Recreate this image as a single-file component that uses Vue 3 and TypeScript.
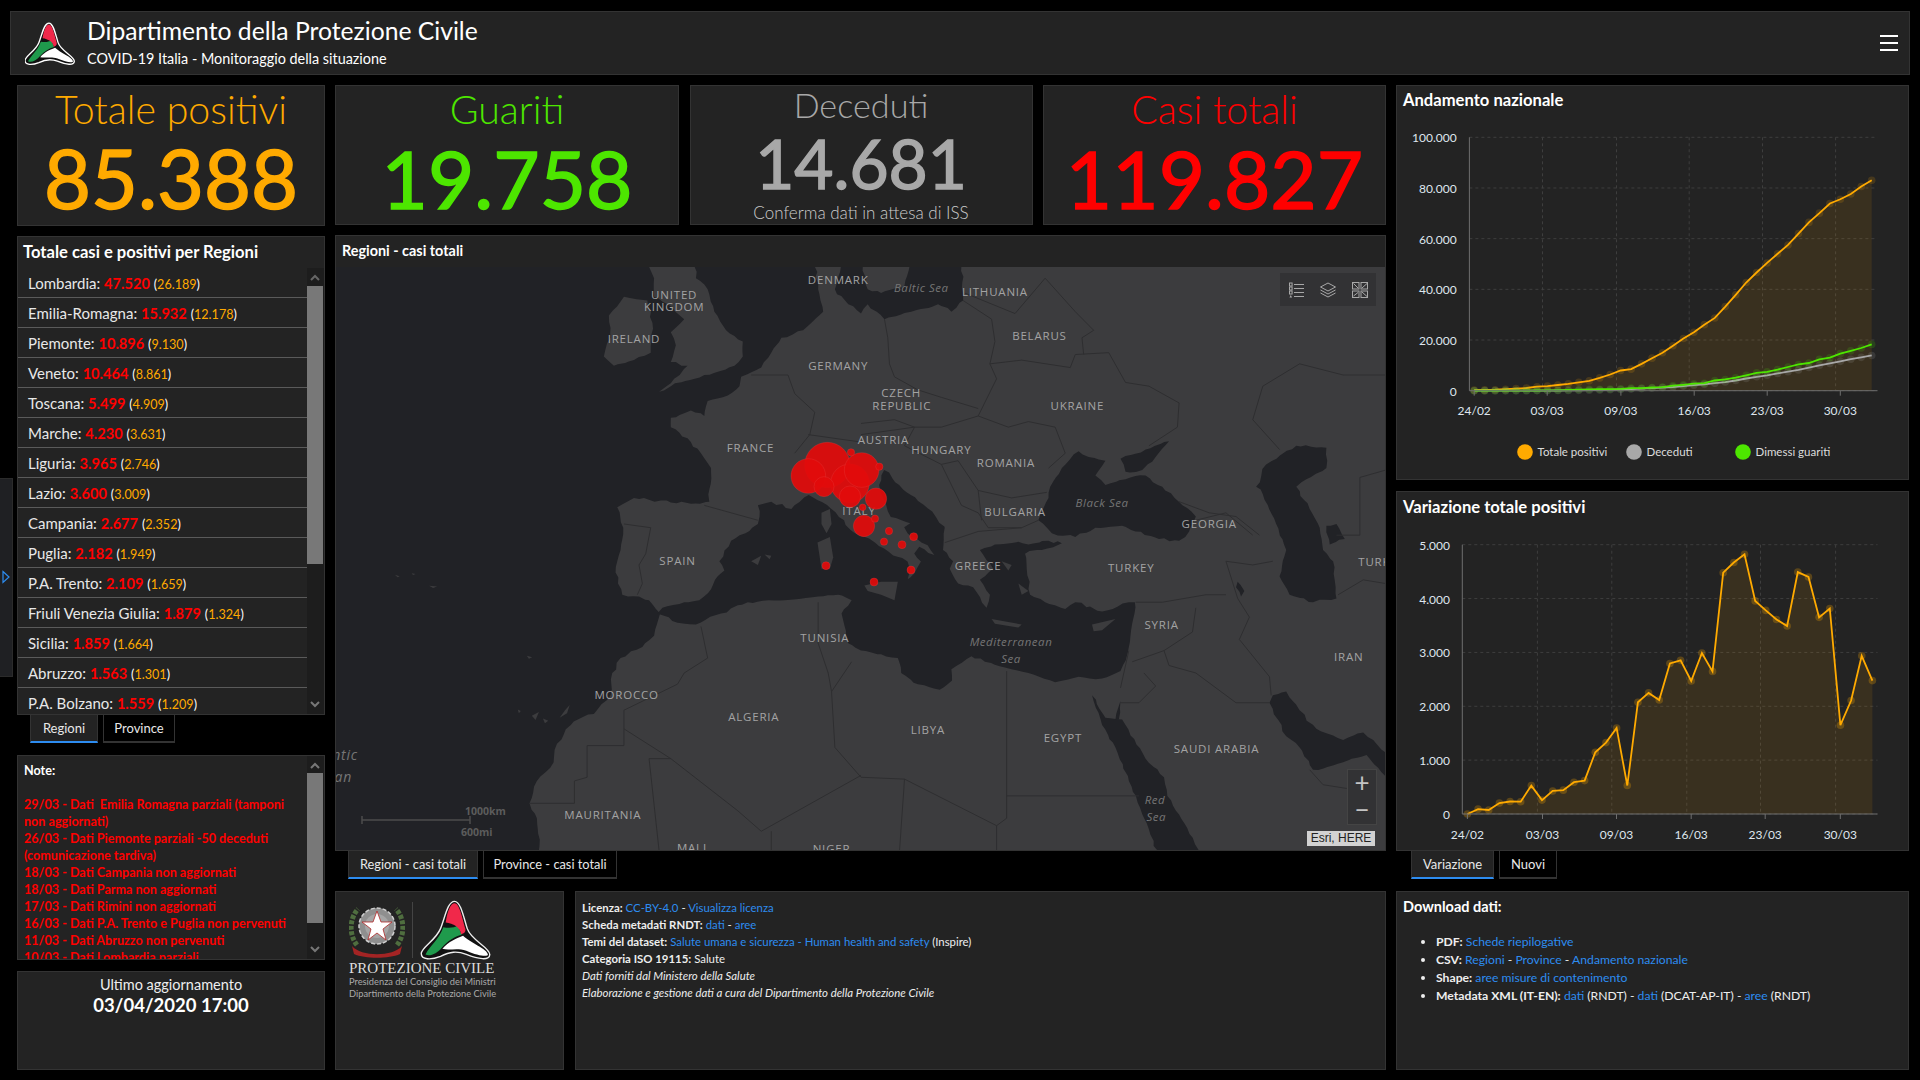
<script setup lang="ts">
import { computed } from 'vue'

const regions = [
  ['Lombardia', '47.520', '26.189'], ['Emilia-Romagna', '15.932', '12.178'], ['Piemonte', '10.896', '9.130'],
  ['Veneto', '10.464', '8.861'], ['Toscana', '5.499', '4.909'], ['Marche', '4.230', '3.631'],
  ['Liguria', '3.965', '2.746'], ['Lazio', '3.600', '3.009'], ['Campania', '2.677', '2.352'],
  ['Puglia', '2.182', '1.949'], ['P.A. Trento', '2.109', '1.659'], ['Friuli Venezia Giulia', '1.879', '1.324'],
  ['Sicilia', '1.859', '1.664'], ['Abruzzo', '1.563', '1.301'], ['P.A. Bolzano', '1.559', '1.209'],
]

const notes = [
  '29/03 - Dati  Emilia Romagna parziali (tamponi non aggiornati)',
  '26/03 - Dati Piemonte parziali -50 deceduti (comunicazione tardiva)',
  '18/03 - Dati Campania non aggiornati',
  '18/03 - Dati Parma non aggiornati',
  '17/03 - Dati Rimini non aggiornati',
  '16/03 - Dati P.A. Trento e Puglia non pervenuti',
  '11/03 - Dati Abruzzo non pervenuti',
  '10/03 - Dati Lombardia parziali',
]

// ---- charts: everything is in page pixels, the svg viewBox starts at the panel offset
const positivi = [221, 311, 385, 588, 821, 1049, 1577, 1835, 2263, 2706, 3296, 3916, 5061, 6387, 7985, 8514, 10590, 12839, 14955, 17750, 20603, 23073, 26062, 28710, 33190, 37860, 42681, 46638, 50418, 54030, 57521, 62013, 66414, 70065, 73880, 75528, 77635, 80572, 83049]
const deceduti = [7, 10, 12, 17, 21, 29, 34, 52, 79, 107, 148, 197, 233, 366, 463, 631, 827, 1016, 1266, 1441, 1809, 2158, 2503, 2978, 3405, 4032, 4825, 5476, 6077, 6820, 7503, 8215, 9134, 10023, 10779, 11591, 12428, 13155, 13915]
const guariti = [1, 1, 3, 45, 46, 50, 83, 149, 160, 276, 414, 523, 589, 622, 724, 1004, 1045, 1258, 1439, 1966, 2335, 2749, 2941, 4025, 4440, 5129, 6072, 7024, 7432, 8326, 9362, 10361, 10950, 12384, 13030, 14620, 15729, 16847, 18278]
const variazione = [0, 90, 74, 203, 233, 228, 528, 258, 428, 443, 590, 620, 1145, 1326, 1598, 529, 2076, 2249, 2116, 2795, 2853, 2470, 2989, 2648, 4480, 4670, 4821, 3957, 3780, 3612, 3491, 4492, 4401, 3651, 3815, 1648, 2107, 2937, 2477]

const tickLabels = ['24/02', '03/03', '09/03', '16/03', '23/03', '30/03']

interface Box { x0: number; x1: number; left: number; right: number; top: number; bottom: number; max: number }

function pts(data: number[], b: Box) {
  return data.map((v, i) => ({
    x: b.x0 + (i * (b.x1 - b.x0)) / (data.length - 1),
    y: b.bottom - (v / b.max) * (b.bottom - b.top),
  }))
}
const toLine = (p: { x: number; y: number }[]) => p.map((q) => `${q.x.toFixed(1)},${q.y.toFixed(1)}`).join(' ')
const toArea = (p: { x: number; y: number }[], bottom: number) =>
  `${p[0].x},${bottom} ${toLine(p)} ${p[p.length - 1].x},${bottom}`

const box1: Box = { x0: 1474.2, x1: 1871.7, left: 1469.4, right: 1877.5, top: 137.3, bottom: 390.7, max: 100000 }
const box2: Box = { x0: 1467.4, x1: 1872.4, left: 1462.3, right: 1877.5, top: 544.7, bottom: 814, max: 5000 }

const ticks1 = [1474.2, 1547.2, 1620.9, 1694.2, 1767.2, 1840.3]
const grid1 = [1542.5, 1616.5, 1689.2, 1762.5, 1835.6]
const ticks2 = [1467.4, 1542.5, 1616.5, 1691.2, 1765.2, 1840.3]
const grid2 = [1537.4, 1611.8, 1686.8, 1760.5, 1835.6]

const series1 = computed(() => [
  { color: '#ffaa00', p: pts(positivi, box1) },
  { color: '#a8a8a8', p: pts(deceduti, box1) },
  { color: '#4de600', p: pts(guariti, box1) },
])
const series2 = computed(() => pts(variazione, box2))

const yVals1 = ['100.000', '80.000', '60.000', '40.000', '20.000', '0']
const yVals2 = ['5.000', '4.000', '3.000', '2.000', '1.000', '0']
const legend = [
  { label: 'Totale positivi', cx: 1525, color: '#ffaa00' },
  { label: 'Deceduti', cx: 1634, color: '#a8a8a8' },
  { label: 'Dimessi guariti', cx: 1743, color: '#4de600' },
]
const yAt = (b: Box, i: number) => b.top + (i * (b.bottom - b.top)) / 5

// ---- map: outlines are in a 3136x1568 space, scaled onto the 1050x584 map
const shift = (s: string) =>
  s.trim().split(/\s+/).map((p) => {
    const [x, y] = p.split(',')
    return `${+x + 1568},${y}`
  }).join(' ')

// breaks long straight edges up a little so coasts don't look like plain polygons
function rough(s: string, amp = 4, step = 16) {
  const p = s.trim().split(/\s+/).map((q) => q.split(',').map(Number))
  const out: string[] = []
  p.forEach((a, i) => {
    const b = p[(i + 1) % p.length]
    const n = Math.max(1, Math.round(Math.hypot(b[0] - a[0], b[1] - a[1]) / step))
    for (let k = 0; k < n; k++) {
      const t = k / n
      const x = a[0] + (b[0] - a[0]) * t
      const y = a[1] + (b[1] - a[1]) * t
      const dx = k ? Math.sin(x * 0.37 + y * 0.71) * Math.cos(y * 0.23) * amp : 0
      const dy = k ? Math.cos(x * 0.53 - y * 0.41) * Math.sin(x * 0.19) * amp : 0
      out.push(`${(x + dx).toFixed(1)},${(y + dy).toFixed(1)}`)
    }
  })
  return out.join(' ')
}

const ocean = '1430,-20 1440,60 1455,120 1420,150 1395,170 1330,190 1300,230 1270,270 1210,295 1205,320 1170,345 1110,360 1100,400 1060,385 1000,405 1000,430 1050,460 1090,500 1120,540 1115,630 1075,635 1000,632 890,620 840,645 858,700 850,760 835,820 855,880 905,885 935,895 968,930 950,990 915,1020 850,1050 825,1090 820,1150 770,1200 710,1220 660,1280 650,1330 600,1380 578,1440 600,1480 612,1600 -20,1600 -20,-20'
const med = '960,930 975,915 1040,900 1085,895 1120,865 1140,830 1160,815 1145,790 1180,735 1260,690 1265,670 1260,640 1300,630 1360,650 1412,612 1477,648 1502,671 1537,706 1577,724 1637,756 1677,778 1707,791 1715,814 1707,841 1695,850 1727,823 1747,791 1727,769 1742,751 1787,773 1767,747 1707,715 1697,699 1715,688 1657,671 1642,635 1622,585 1629,559 1637,545 1652,552 1662,568 1682,585 1717,612 1767,648 1817,697 '
  + shift('250,700 245,760 275,790 265,810 290,850 335,860 375,915 385,880 355,840 395,810 355,760 400,745 470,738 500,745 560,735 600,742 540,760 490,770 495,810 505,880 550,900 610,918 640,900 720,925 800,900 818,900 800,1020 775,1085 720,1105 650,1100 580,1115 500,1090 430,1075 370,1060 330,1045 270,1080 272,1110 235,1135 170,1120 120,1090 110,1050 60,1040 0,1030')
  + ' 1530,1010 1510,930 1540,895 1500,880 1440,885 1340,895 1230,900 1150,930 1075,960 1020,955 975,935'

const seas = [
  ocean,
  med,
  // baltic and kattegat
  '1510,-20 1490,60 1530,100 1568,125 ' + shift('20,100 70,140 150,120 230,100 270,120 305,90 300,-20 150,-20 130,50 60,70 20,60 0,-20'),
  ...[
    '600,540 650,495 680,510 730,520 700,560 730,585 790,570 850,560 900,590 960,640 1000,670 980,710 950,735 890,730 820,710 780,695 700,700 640,725 570,715 530,680 560,620 565,590',
    '775,515 850,490 920,468 880,510 840,545 790,550',
    '1300,480 1390,485 1390,540 1330,570 1300,590 1340,650 1370,700 1380,760 1410,790 1420,890 1350,900 1280,880 1250,830 1270,760 1240,690 1200,610 1180,590 1210,530',
    '1390,695 1420,690 1445,730 1400,745',
    '1125,845 1145,870 1135,885 1120,860',
    '690,1150 730,1210 780,1215 850,1320 905,1370 915,1420 950,1470 1030,1600 895,1600 860,1510 800,1380 760,1290 720,1230',
    '775,1165 760,1215 770,1215',
    '1230,1150 1270,1140 1310,1190 1360,1240 1440,1270 1500,1250 1530,1270 1600,1340 1600,1400 1510,1310 1440,1330 1350,1350 1310,1290 1270,1260 1220,1170',
  ].map(shift),
].map((s) => rough(s))

const islands = [
  ...[
    '930,-20 1070,-20 1075,30 1110,60 1130,120 1165,170 1215,200 1215,240 1190,265 1100,290 1000,320 965,335 1010,300 1050,265 1000,255 1015,210 1000,175 1040,140 990,100 950,80 950,30',
    '815,130 860,80 930,90 945,150 940,230 890,250 830,265 800,240 820,190',
  ].map((s) => rough(s)),
  '1450,660 1475,650 1480,690 1465,715 1450,690',
  '1438,740 1475,725 1485,780 1475,810 1450,810',
  '1240,790 1270,775 1260,800',
  '1280,772 1300,775 1295,785',
  // azores, madeira, canaries
  '176,826 190,830 184,833', '226,822 238,824 230,827', '278,856 302,858 290,862', '570,1044 586,1048 576,1052',
  '543,1188 552,1192 546,1198', '585,1205 606,1195 596,1216', '618,1212 634,1218 624,1225', '668,1210 684,1190 698,1176 690,1198',
  ...[
    '10,855 60,845 110,845 100,895 60,880 20,870',
    '390,945 480,960 470,968 400,958',
    '690,960 760,945 720,975 695,978',
    '420,790 450,800 440,815',
    '470,850 500,870 480,880',
  ].map(shift),
]

const borders = [
  '1100,640 1180,660 1260,680', '860,690 940,700 925,770 905,800 915,850 900,880',
  '1240,290 1350,290 1370,340 1430,390 1415,450 1370,500',
  '1090,965 1110,1050 1040,1090 1020,1120 860,1190 860,1240 1000,1320 1200,1460 1270,1515 1568,1365',
  '860,1240 860,1285 750,1285 750,1370 712,1380 712,1440 578,1440', '935,1320 1000,1320', '935,1320 965,1568',
  '1440,900 1440,1010 1470,1090 1480,1140 1540,1060', '1480,1140 1490,1290 1568,1370', '1300,1515 1300,1568',
  '1410,450 1568,470',
  ...[
    '70,140 80,190 85,260 100,295', '305,90 390,140 400,200 385,260 405,300 350,400', '100,295 170,330 240,350 350,380',
    '385,260 480,250 625,270 640,235 740,230 790,310 860,320 950,365 945,430 860,480', '310,70 460,125', '460,125 550,30 640,120 695,170 660,190 665,235',
    '350,400 440,430 500,415 580,430 610,500 560,540', '290,520 350,600 450,620 555,605', '160,430 240,430 350,400', '160,430 130,480 240,530 290,520',
    '240,530 300,640 350,660 380,700 480,700 530,680', '350,600 360,680', '250,740 350,710 480,700', '0,450 160,430', '0,420 100,410 160,430',
    '1000,680 1090,660 1170,720', '1090,790 1170,800 1230,790', '950,630 1040,660 1120,670 1190,720', '820,900 900,900 1030,880 1090,880',
    '1090,790 1125,890 1160,940 1130,1000 1220,1100 1225,1150', '1000,915 990,980 905,1030 810,1060', '905,1030 920,1070 1000,1090 1120,1170 1220,1170',
    '845,1090 880,1125 830,1170 775,1170', '800,1030 775,1130', '435,1085 435,1480 405,1500 405,1568', '435,1420 720,1420 830,1420',
    '0,1370 130,1375 405,1500', '130,1375 115,1568', '1490,565 1568,545', '1490,565 1490,720 1420,720', '1425,880 1500,840 1568,850',
    '1340,1350 1380,1390 1450,1400 1490,1380', '1170,410 1200,320 1310,260 1440,290 1568,290', '1170,410 1250,490',
  ].map(shift),
]

const SX = 1050 / 3136
const SY = 584 / 1568

const labels = [
  ['UNITED', 1010, 75], ['KINGDOM', 1010, 107], ['IRELAND', 890, 193], ['DENMARK', 1500, 35], ['GERMANY', 1500, 266],
  ['FRANCE', 1238, 486], ['SPAIN', 1020, 790], ['TUNISIA', 1460, 996], ['MOROCCO', 868, 1149], ['ALGERIA', 1248, 1208],
  ['MAURITANIA', 797, 1471], ['MALI', 1063, 1560], ['NIGER', 1480, 1562], ['ITALY', 1562, 655],
  ['LITHUANIA', 1968, 67], ['BELARUS', 2101, 185], ['CZECH', 1688, 338], ['REPUBLIC', 1690, 373], ['UKRAINE', 2214, 373],
  ['AUSTRIA', 1635, 464], ['HUNGARY', 1808, 491], ['ROMANIA', 2001, 526], ['BULGARIA', 2028, 658], ['GEORGIA', 2608, 690],
  ['GREECE', 1918, 803], ['TURKEY', 2375, 808], ['TURKMENISTAN', 3136 + 60, 792], ['SYRIA', 2466, 961], ['IRAN', 3025, 1047],
  ['LIBYA', 1768, 1243], ['EGYPT', 2171, 1265], ['SAUDI ARABIA', 2630, 1294],
].map(([t, x, y]) => ({ t: t as string, x: (x as number) * SX, y: (y as number) * SY + 4 }))

const seaLabels = [
  ['Baltic Sea', 1748, 57], ['Black Sea', 2288, 633], ['Mediterranean', 2016, 1007], ['Sea', 2016, 1052],
  ['Red', 2446, 1432], ['Sea', 2450, 1477],
].map(([t, x, y]) => ({ t: t as string, x: (x as number) * SX, y: (y as number) * SY + 4 }))

// x = 414 + zx / 3, y = 153 + zy / 3 from the italy crop
const bubbles = [
  [232, 135, 68], [175, 168, 52], [300, 190, 58], [335, 150, 52], [222, 200, 30], [300, 230, 32], [378, 236, 32],
  [303, 97, 11], [388, 140, 11], [338, 262, 10], [342, 318, 32], [375, 296, 11], [417, 333, 11], [402, 365, 11],
  [491, 350, 12], [456, 374, 12], [483, 450, 12], [372, 486, 12], [228, 437, 12],
].map(([x, y, r]) => ({ x: 414 + x / 3, y: 153 + y / 3, r: r / 3 }))
</script>

<template>
  <div class="page">
    <div class="side-handle"><svg width="8" height="14" viewBox="0 0 8 14"><path d="M1 1.5 L7 7 L1 12.5 Z" fill="none" stroke="#2d8cf0" stroke-width="1.2" /></svg></div>

    <header class="top">
      <svg class="top-logo" width="50" height="44" viewBox="74 64 148 130">
        <path d="M145 67 C158 67 164 100 172 125 C180 150 220 165 220 180 C220 194 195 190 170 180 C150 172 135 174 115 184 C95 192 74 192 74 178 C74 165 105 150 115 125 C125 100 130 67 145 67 Z" fill="#111" stroke="#fff" stroke-width="4" />
        <path d="M83 180 C92 162 112 148 121 122 C132 124 144 124 152 118 L160 138 C145 142 132 150 118 165 C108 178 92 185 83 180 Z" fill="#1f9a4c" />
        <path d="M126 112 C130 86 137 71 145 71 C155 71 161 100 168 126 C169 133 164 136 159 137 C157 122 142 114 126 112 Z" fill="#f0284a" />
        <path d="M119 168 C132 152 150 145 163 140 C178 155 215 168 216 180 C216 186 195 183 170 172 C150 165 135 172 119 168 Z" fill="#fff" />
      </svg>
      <div class="top-text">
        <div class="top-title">Dipartimento della Protezione Civile</div>
        <div class="top-sub">COVID-19 Italia - Monitoraggio della situazione</div>
      </div>
      <div class="burger"><span></span><span></span><span></span></div>
    </header>

    <main class="main">
      <div class="col">
        <section class="panel stat stat-first">
          <div class="stat-title orange">Totale positivi</div>
          <div class="stat-num orange">85.388</div>
        </section>

        <section class="panel list-panel">
          <h2 class="list-title">Totale casi e positivi per Regioni</h2>
          <div class="list-body">
            <ul class="rows">
              <li v-for="r in regions" :key="r[0]" class="row">
                {{ r[0] }}: <b class="red">{{ r[1] }}</b> <small>(<span class="orange">{{ r[2] }}</span>)</small>
              </li>
            </ul>
            <div class="scrollbar sb-list">
              <svg class="arrow" width="16" height="16" viewBox="0 0 16 16"><path d="M4 10 L8 6 L12 10" fill="none" stroke="#666" stroke-width="2" /></svg>
              <div class="thumb thumb-list"></div>
              <svg class="arrow arrow-end" width="16" height="16" viewBox="0 0 16 16"><path d="M4 6 L8 10 L12 6" fill="none" stroke="#777" stroke-width="2" /></svg>
            </div>
          </div>
        </section>
        <div class="tabs tabs-left">
          <div class="tab active">Regioni</div>
          <div class="tab">Province</div>
        </div>

        <section class="panel note-panel">
          <div class="note-text">
            <div class="note-head">Note:</div>
            <div v-for="n in notes" :key="n" class="note-line">{{ n }}</div>
          </div>
          <div class="scrollbar sb-note">
            <svg class="arrow" width="16" height="16" viewBox="0 0 16 16"><path d="M4 10 L8 6 L12 10" fill="none" stroke="#777" stroke-width="2" /></svg>
            <div class="thumb thumb-note"></div>
            <svg class="arrow arrow-end" width="16" height="16" viewBox="0 0 16 16"><path d="M4 6 L8 10 L12 6" fill="none" stroke="#777" stroke-width="2" /></svg>
          </div>
        </section>

        <section class="panel updated">
          <div class="updated-label">Ultimo aggiornamento</div>
          <div class="updated-date">03/04/2020 17:00</div>
        </section>
      </div>

      <div class="col">
        <div class="stats">
          <section class="panel stat">
            <div class="stat-title green">Guariti</div>
            <div class="stat-num green">19.758</div>
          </section>
          <section class="panel stat stat-dead">
            <div class="stat-title grey">Deceduti</div>
            <div class="stat-num grey">14.681</div>
            <div class="stat-note">Conferma dati in attesa di ISS</div>
          </section>
          <section class="panel stat">
            <div class="stat-title red">Casi totali</div>
            <div class="stat-num red">119.827</div>
          </section>
        </div>

        <section class="panel map-panel">
          <h2 class="map-title">Regioni - casi totali</h2>
          <div class="map">
            <svg class="map-svg" width="1050" height="584" viewBox="0 0 1050 584">
              <rect width="1050" height="584" fill="#3c3c3e" />
              <g :transform="`scale(${SX} ${SY})`">
                <polygon v-for="(s, i) in seas" :key="'s' + i" :points="s" fill="#212226" />
                <polygon v-for="(s, i) in islands" :key="'i' + i" :points="s" fill="#3c3c3e" />
                <polyline v-for="(s, i) in borders" :key="'b' + i" :points="s" fill="none" stroke="#2e2e30" stroke-width="1" vector-effect="non-scaling-stroke" />
              </g>
              <text v-for="l in labels" :key="l.t + l.x" class="map-label" :x="l.x" :y="l.y" text-anchor="middle">{{ l.t }}</text>
              <text v-for="l in seaLabels" :key="l.t + l.x" class="sea-label" :x="l.x" :y="l.y" text-anchor="middle">{{ l.t }}</text>
              <text class="ocean-label" x="22" y="493" text-anchor="end">Atlantic</text>
              <text class="ocean-label" x="16" y="515" text-anchor="end">Ocean</text>
              <g>
                <circle v-for="(b, i) in bubbles" :key="i" :cx="b.x" :cy="b.y" :r="b.r" fill="#e20b0b" fill-opacity=".93" stroke="#e64a4a" stroke-opacity=".25" />
              </g>
              <path d="M26 549 V557 M26 553 H134 M134 549 V557" stroke="#4c4c4c" stroke-width="1.5" fill="none" />
              <text class="scale-label" x="129" y="548">1000km</text>
              <text class="scale-label" x="125" y="569">600mi</text>
            </svg>

            <div class="map-tools">
              <svg width="15" height="16" viewBox="0 0 15 16">
                <g fill="none" stroke="#a8a8a8">
                  <path d="M5 2.5H15M5 6.5H15M5 10.5H15M5 14.5H15" />
                  <rect x=".5" y="1" width="2.6" height="3" /><rect x=".5" y="5" width="2.6" height="3" /><rect x=".5" y="9" width="2.6" height="3" />
                </g>
                <path d="M.5 15.5 L1.8 13 L3.1 15.5 Z" fill="#a8a8a8" />
              </svg>
              <svg width="16" height="16" viewBox="0 0 16 16">
                <g fill="none" stroke="#a8a8a8">
                  <path d="M.5 5 L8 1 L15.5 5 L8 9 Z" />
                  <path d="M.5 8 L8 12 L15.5 8" />
                  <path d="M.5 11 L8 15 L15.5 11" />
                </g>
              </svg>
              <svg width="16" height="16" viewBox="0 0 16 16">
                <g fill="none" stroke="#a8a8a8">
                  <rect x=".5" y=".5" width="6.5" height="6.5" /><rect x="9" y=".5" width="6.5" height="6.5" /><rect x=".5" y="9" width="6.5" height="6.5" /><rect x="9" y="9" width="6.5" height="6.5" />
                  <path d="M10 6 L15 1.5 M1.5 14 L6 10.5 M1.5 1.5 L6 6 M10 10 L15 14.5" />
                </g>
              </svg>
            </div>
            <div class="map-zoom">
              <div class="zoom-btn">+</div>
              <div class="zoom-btn">−</div>
            </div>
            <div class="attribution">Esri, HERE</div>
          </div>
        </section>
        <div class="tabs tabs-map">
          <div class="tab active">Regioni - casi totali</div>
          <div class="tab">Province - casi totali</div>
        </div>

        <div class="bottom">
          <section class="panel logo-panel">
            <div class="logos">
              <svg width="56" height="58" viewBox="0 0 56 58">
                <g fill="none" stroke="#4f6e3f" stroke-width="5">
                  <path d="M8 44 C0 34 0 18 9 8" stroke-dasharray="4 1.5" />
                  <path d="M48 44 C56 34 56 18 47 8" stroke-dasharray="4 1.5" />
                </g>
                <circle cx="28" cy="25" r="18" fill="#8f8f8f" stroke="#cfcfcf" stroke-width="1.5" stroke-dasharray="4 2" />
                <circle cx="28" cy="25" r="12" fill="#a5a5a5" />
                <polygon points="28,10 32,21 43,21 34,28 37,39 28,32 19,39 22,28 13,21 24,21" fill="#fff" stroke="#b02a2a" stroke-width=".8" />
                <path d="M3 45 C12 56 44 56 53 45 L51 53 C40 58 16 58 5 53 Z" fill="#a42424" />
              </svg>
              <span class="logo-rule"></span>
              <svg width="76" height="61" viewBox="74 64 148 130">
                <path d="M145 67 C158 67 164 100 172 125 C180 150 220 165 220 180 C220 194 195 190 170 180 C150 172 135 174 115 184 C95 192 74 192 74 178 C74 165 105 150 115 125 C125 100 130 67 145 67 Z" fill="#111" stroke="#eee" stroke-width="3" />
                <path d="M83 180 C92 162 112 148 121 122 C132 124 144 124 152 118 L160 138 C145 142 132 150 118 165 C108 178 92 185 83 180 Z" fill="#1f9a4c" />
                <path d="M126 112 C130 86 137 71 145 71 C155 71 161 100 168 126 C169 133 164 136 159 137 C157 122 142 114 126 112 Z" fill="#f0284a" />
                <path d="M119 168 C132 152 150 145 163 140 C178 155 215 168 216 180 C216 186 195 183 170 172 C150 165 135 172 119 168 Z" fill="#fff" />
              </svg>
            </div>
            <div class="logo-name">PROTEZIONE CIVILE</div>
            <div class="logo-sub">Presidenza del Consiglio dei Ministri</div>
            <div class="logo-sub">Dipartimento della Protezione Civile</div>
          </section>
          <section class="panel info-panel">
            <p><b>Licenza:</b> <a>CC-BY-4.0</a> - <a>Visualizza licenza</a></p>
            <p><b>Scheda metadati RNDT:</b> <a>dati</a> - <a>aree</a></p>
            <p><b>Temi del dataset:</b> <a>Salute umana e sicurezza - Human health and safety</a> (Inspire)</p>
            <p><b>Categoria ISO 19115:</b> Salute</p>
            <p><i>Dati forniti dal Ministero della Salute</i></p>
            <p><i>Elaborazione e gestione dati a cura del Dipartimento della Protezione Civile</i></p>
          </section>
        </div>
      </div>

      <div class="col">
        <section class="panel chart-panel chart-one">
          <h2 class="chart-title">Andamento nazionale</h2>
          <svg class="chart" width="513" height="360" viewBox="1396 120 513 360">
            <line v-for="(v, i) in yVals1" :key="'g' + v" :x1="box1.left" :x2="box1.right" :y1="yAt(box1, i)" :y2="yAt(box1, i)" class="grid" />
            <line v-for="x in grid1" :key="x" :x1="x" :x2="x" :y1="box1.top" :y2="box1.bottom" class="grid" />
            <polygon :points="toArea(series1[0].p, box1.bottom)" fill="#ffaa00" fill-opacity=".1" />
            <template v-for="s in series1" :key="s.color">
              <circle v-for="(q, i) in s.p" :key="i" :cx="q.x" :cy="q.y" r="3.8" :fill="s.color" fill-opacity=".16" />
              <polyline :points="toLine(s.p)" fill="none" :stroke="s.color" stroke-width="1.8" />
            </template>
            <path :d="`M${box1.left} ${box1.top} V${box1.bottom} H${box1.right}`" class="axis" />
            <line v-for="x in ticks1" :key="x" :x1="x" :x2="x" :y1="box1.bottom" :y2="box1.bottom + 5" class="axis" />
            <text v-for="(v, i) in yVals1" :key="v" :x="1456.6" :y="yAt(box1, i) + 5" text-anchor="end" class="tick">{{ v }}</text>
            <text v-for="(t, i) in tickLabels" :key="t" :x="ticks1[i]" y="414.5" text-anchor="middle" class="tick">{{ t }}</text>
            <g v-for="l in legend" :key="l.label">
              <circle :cx="l.cx" cy="452" r="7.8" :fill="l.color" />
              <text :x="l.cx + 12.5" y="456" class="legend">{{ l.label }}</text>
            </g>
          </svg>
        </section>

        <section class="panel chart-panel chart-two">
          <h2 class="chart-title">Variazione totale positivi</h2>
          <svg class="chart" width="513" height="325" viewBox="1396 526 513 325">
            <line v-for="(v, i) in yVals2" :key="'g' + v" :x1="box2.left" :x2="box2.right" :y1="yAt(box2, i)" :y2="yAt(box2, i)" class="grid" />
            <line v-for="x in grid2" :key="x" :x1="x" :x2="x" :y1="box2.top" :y2="box2.bottom" class="grid" />
            <polygon :points="toArea(series2, box2.bottom)" fill="#ffaa00" fill-opacity=".1" />
            <circle v-for="(q, i) in series2" :key="i" :cx="q.x" :cy="q.y" r="3.8" fill="#ffaa00" fill-opacity=".25" />
            <polyline :points="toLine(series2)" fill="none" stroke="#ffaa00" stroke-width="1.8" />
            <path :d="`M${box2.left} ${box2.top} V${box2.bottom} H${box2.right}`" class="axis" />
            <line v-for="x in ticks2" :key="x" :x1="x" :x2="x" :y1="box2.bottom" :y2="box2.bottom + 5" class="axis" />
            <text v-for="(v, i) in yVals2" :key="v" :x="1450" :y="yAt(box2, i) + 5" text-anchor="end" class="tick">{{ v }}</text>
            <text v-for="(t, i) in tickLabels" :key="t" :x="ticks2[i]" y="838.5" text-anchor="middle" class="tick">{{ t }}</text>
          </svg>
        </section>
        <div class="tabs tabs-chart">
          <div class="tab active">Variazione</div>
          <div class="tab">Nuovi</div>
        </div>

        <section class="panel download">
          <h2 class="dl-title">Download dati:</h2>
          <ul class="dl-list">
            <li><b>PDF:</b> <a>Schede riepilogative</a></li>
            <li><b>CSV:</b> <a>Regioni</a> - <a>Province</a> - <a>Andamento nazionale</a></li>
            <li><b>Shape:</b> <a>aree misure di contenimento</a></li>
            <li><b>Metadata XML (IT-EN):</b> <a>dati</a> (RNDT) - <a>dati</a> (DCAT-AP-IT) - <a>aree</a> (RNDT)</li>
          </ul>
        </section>
      </div>
    </main>
  </div>
</template>

<style>
html, body { margin: 0; background: #000; }
</style>

<style scoped>
.page {
  position: relative; width: 1920px; height: 1080px; box-sizing: border-box; overflow: hidden;
  padding: 11px 10px 0; background: #000; color: #fff;
  font-family: Lato, "Noto Sans", sans-serif;
}
.side-handle {
  position: absolute; left: 0; top: 478px; width: 13px; height: 199px; background: #1f2023; border: 1px solid #2b2b2b; border-left: 0;
  display: flex; align-items: center; box-sizing: border-box; padding-left: 2px;
}
.side-handle svg { margin-top: -1px; }

.panel { background: #232323; border: 1px solid #333; box-sizing: border-box; }
.orange { color: #ffaa00; }
.green { color: #4de600; }
.grey { color: #a8a8a8; }
.red { color: #ff0000; }

.top { height: 64px; box-sizing: border-box; background: #232323; border: 1px solid #333; display: flex; align-items: center; padding: 0 11px 0 14px; margin-bottom: 10px; }
.top-logo { flex: none; margin-right: 12px; margin-top: 2px; }
.top-text { flex: 1; margin-top: -1px; }
.top-title { font-size: 24.7px; line-height: 30px; }
.top-sub { font-size: 14.4px; line-height: 20px; margin-top: 3px; }
.burger { display: flex; flex-direction: column; gap: 5px; width: 18px; }
.burger span { height: 2px; background: #fff; }

.main { display: grid; grid-template-columns: 308px 1051px 513px; column-gap: 10px; margin-left: 7px; }
.col { display: flex; flex-direction: column; height: 985px; }

.stat { height: 140px; text-align: center; overflow: hidden; }
.stat-first { height: 141px; }
.stats { display: grid; grid-template-columns: 344px 343px 343px; column-gap: 10.5px; margin-bottom: 10px; }
.stat-title { font-size: 39.3px; line-height: 44px; margin-top: 1px; font-weight: 300; }
.stat-num { font-size: 80px; line-height: 84px; margin-top: 5px; -webkit-text-stroke: 1.5px currentColor; }
.stat-first .stat-num { font-size: 81px; }
.stat-dead .stat-title { font-size: 34.2px; line-height: 42px; margin-top: -2px; }
.stat-dead .stat-num { font-size: 67.5px; line-height: 72px; margin-top: 1px; }
.stat-note { font-size: 17px; line-height: 20px; color: #ccc; margin-top: 4px; font-weight: 300; }

.list-panel { height: 479px; margin-top: 10px; display: flex; flex-direction: column; }
.list-title { margin: 0; height: 31px; line-height: 30px; font-size: 16.6px; font-weight: 700; padding-left: 5px; }
.list-body { flex: 1; position: relative; overflow: hidden; }
.rows { list-style: none; margin: 0; padding: 0; width: 290px; }
.row { height: 30px; box-sizing: border-box; border-bottom: 1px solid #5a5a5a; padding-left: 10px; font-size: 15px; line-height: 30px; white-space: pre-wrap; color: #e8e8e8; }
.row b { font-size: 14.6px; }
.row small { font-size: 12.6px; color: #fff; }

.scrollbar { position: absolute; right: 0; width: 17px; background: #1d1d1d; }
.sb-list { top: 0; bottom: 0; }
.sb-note { top: 0; bottom: 0; }
.arrow { display: block; position: absolute; left: 0; top: 2px; }
.arrow-end { top: auto; bottom: 2px; }
.thumb { position: absolute; left: 0; right: 1px; background: #787878; }
.thumb-list { top: 18px; height: 278px; }
.thumb-note { top: 17px; height: 150px; }

.tabs { display: flex; gap: 5px; height: 28px; }
.tab { background: #000; border: 1px solid #333; border-top: 0; border-bottom-width: 2px; box-sizing: border-box; display: flex; align-items: center; justify-content: center; font-size: 13px; color: #e8e8e8; }
.tab.active { background: #232323; border-bottom-color: #2d8cf0; }
.tabs-left { padding-left: 13px; }
.tabs-left .tab:first-child { width: 68px; }
.tabs-left .tab:last-child { width: 72px; }
.tabs-map { padding-left: 13px; }
.tabs-map .tab { font-size: 12.8px; }
.tabs-map .tab:first-child { width: 130px; }
.tabs-map .tab:last-child { width: 134px; }
.tabs-chart { padding-left: 15px; }
.tabs-chart .tab:first-child { width: 83px; }
.tabs-chart .tab:last-child { width: 58px; }

.note-panel { position: relative; height: 205px; margin-top: 12px; overflow: hidden; }
.note-text { padding: 6px 22px 0 6px; font-size: 12.6px; line-height: 17px; font-weight: 700; color: #ff0000; }
.note-head { color: #fff; margin-bottom: 17px; }
.note-line { white-space: pre-wrap; }
.updated { height: 99px; margin-top: 11px; text-align: center; }
.updated-label { font-size: 14.5px; line-height: 20px; margin-top: 3px; color: #eee; }
.updated-date { font-size: 18.5px; line-height: 20px; font-weight: 700; }

.map-panel { height: 616px; display: flex; flex-direction: column; }
.map-title { margin: 0; height: 31px; line-height: 30px; font-size: 14.4px; font-weight: 700; padding-left: 6px; }
.map { position: relative; flex: 1; overflow: hidden; }
.map-svg { display: block; }
.map-label { font-size: 11.5px; letter-spacing: .8px; fill: #a3a3a3; font-family: "Open Sans", sans-serif; }
.sea-label { font-size: 11.5px; letter-spacing: .55px; fill: #757575; font-style: italic; font-family: "Open Sans", sans-serif; }
.ocean-label { font-size: 14px; letter-spacing: .8px; fill: #757575; font-style: italic; font-family: "Open Sans", sans-serif; }
.scale-label { font-size: 10.5px; font-weight: 700; fill: #5c5c5c; font-family: "Open Sans", sans-serif; }
.map-tools { position: absolute; left: 944px; top: 6px; width: 96px; height: 33px; background: #323234; display: flex; align-items: center; justify-content: center; gap: 16px; box-sizing: border-box; }
.map-zoom { position: absolute; left: 1011px; top: 502px; width: 30px; height: 56px; background: #323234; border: 1px solid #444; box-sizing: border-box; }
.zoom-btn { height: 27px; line-height: 25px; text-align: center; font-size: 26px; font-weight: 400; color: #c4c4c4; }
.attribution { position: absolute; left: 971px; top: 564px; width: 68px; height: 15px; text-align: center; background: #d2d2d2; color: #222; font: 12px/15px "Liberation Sans", sans-serif; }

.bottom { display: flex; gap: 11px; height: 179px; margin-top: 12px; }
.logo-panel { width: 229px; padding: 7px 0 0 13px; }
.logos { display: flex; align-items: center; height: 62px; gap: 7px; }
.logo-rule { width: 1px; height: 56px; background: #444; margin-right: -2px; }
.logo-name { font-family: "Liberation Serif", serif; font-size: 15px; line-height: 15px; color: #ddd; white-space: nowrap; }
.logo-sub { font-size: 9.3px; line-height: 11.5px; color: #aaa; white-space: nowrap; }
.info-panel { flex: 1; padding: 7px 0 0 6px; font-size: 11.4px; line-height: 17px; color: #eee; }
.info-panel p { margin: 0; }
a { color: #2d8cf0; }

.chart-panel { overflow: hidden; }
.chart-one { height: 395px; }
.chart-one .chart-title { line-height: 29px; }
.chart-two { height: 360px; margin-top: 11px; }
.chart-title { margin: 0; height: 34px; line-height: 31px; font-size: 16.6px; font-weight: 700; padding-left: 6px; box-sizing: border-box; }
.chart { display: block; margin-left: -1px; }
.grid { stroke: #3e3e3e; stroke-dasharray: 3 3; stroke-width: 1; }
.axis { stroke: #6e6e6e; fill: none; stroke-width: 1; }
.tick { font-size: 12px; fill: #dfe6ee; }
.legend { font-size: 11.5px; fill: #dcdcdc; }

.download { height: 179px; margin-top: 12px; padding: 5px 0 0 6px; font-size: 12.2px; line-height: 18px; }
.dl-title { margin: 0; font-size: 14.5px; font-weight: 700; line-height: 20px; }
.dl-list { margin: 16px 0 0; padding-left: 33px; color: #eee; }
</style>
